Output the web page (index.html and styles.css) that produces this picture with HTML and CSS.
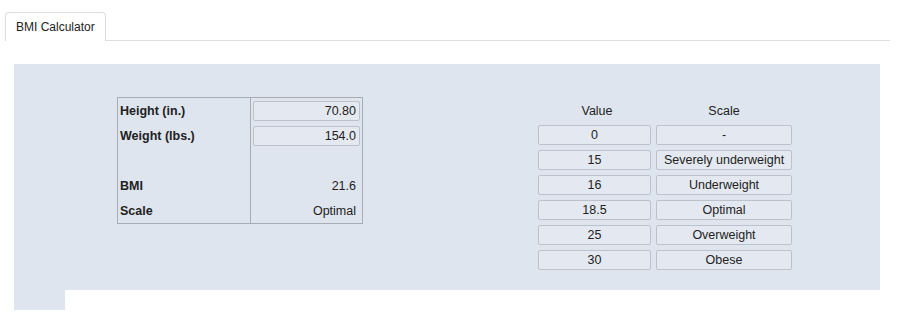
FILE: index.html
```html
<!DOCTYPE html>
<html lang="en">
<head>
    <meta charset="UTF-8">
    <title>BMI Calculator</title>
    <link rel="stylesheet" href="styles.css">
</head>
<body>
    <div class="tabbar">
        <div class="tab">BMI Calculator</div>
        <div class="tab-line"></div>
    </div>
    <div class="panel">
        <table class="calc">
            <tr>
                <td class="label">Height (in.)</td>
                <td class="value"><div class="field">70.80</div></td>
            </tr>
            <tr>
                <td class="label">Weight (lbs.)</td>
                <td class="value"><div class="field">154.0</div></td>
            </tr>
            <tr>
                <td class="label"></td>
                <td class="value"></td>
            </tr>
            <tr>
                <td class="label">BMI</td>
                <td class="value"><div class="out">21.6</div></td>
            </tr>
            <tr>
                <td class="label">Scale</td>
                <td class="value"><div class="out">Optimal</div></td>
            </tr>
        </table>
        <table class="scale">
            <tr>
                <th>Value</th>
                <th>Scale</th>
            </tr>
            <tr><td><div class="cell val">0</div></td><td><div class="cell name">-</div></td></tr>
            <tr><td><div class="cell val">15</div></td><td><div class="cell name">Severely underweight</div></td></tr>
            <tr><td><div class="cell val">16</div></td><td><div class="cell name">Underweight</div></td></tr>
            <tr><td><div class="cell val">18.5</div></td><td><div class="cell name">Optimal</div></td></tr>
            <tr><td><div class="cell val">25</div></td><td><div class="cell name">Overweight</div></td></tr>
            <tr><td><div class="cell val">30</div></td><td><div class="cell name">Obese</div></td></tr>
        </table>
    </div>
    <div class="stub"></div>
</body>
</html>
```

FILE: styles.css
```css
body {
    font-family: "Liberation Sans", Arial, sans-serif;
    font-size: 12.5px;
    color: #222;
    margin: 0;
    padding: 0;
    background-color: #fff;
}
.tabbar {
    display: flex;
    align-items: flex-end;
    padding: 12px 10px 0 5px;
}
.tab {
    height: 28px;
    line-height: 29px;
    padding: 0 10px;
    border: 1px solid #ddd;
    border-bottom: none;
    border-radius: 4px 4px 0 0;
    font-size: 12px;
    color: #222;
}
.tab-line {
    flex: 1;
    border-bottom: 1px solid #ddd;
}
.panel {
    display: flex;
    align-items: flex-start;
    margin: 23px 20px 0 14px;
    height: 226px;
    background-color: #dfe5ee;
    box-sizing: border-box;
    padding: 33px 0 0 103px;
}
.stub {
    margin-left: 14px;
    width: 51px;
    height: 20px;
    background-color: #dfe5ee;
}
.calc {
    border-collapse: collapse;
    border: 1px solid #a7adb5;
    width: 246px;
}
.calc td {
    height: 25px;
    padding: 0;
}
.calc .label {
    width: 130px;
    padding-left: 2px;
    font-weight: bold;
    border-right: 1px solid #a7adb5;
}
.calc .value {
    padding: 0 2px 0 2px;
}
.field, .cell {
    height: 18px;
    line-height: 18px;
    border: 1px solid #bcc2cb;
    border-radius: 2px;
    background-color: #e4e9f1;
}
.field {
    text-align: right;
    padding-right: 3px;
}
.out {
    text-align: right;
    padding-right: 4px;
}
.scale {
    margin-left: 175px;
    border-collapse: separate;
    border-spacing: 0;
}
.scale th {
    font-weight: normal;
    height: 28px;
    padding: 0;
    vertical-align: middle;
}
.scale td {
    padding: 0 0 5px 0;
}
.scale td:first-child {
    padding-right: 5px;
}
.cell {
    text-align: center;
}
.cell.val {
    width: 111px;
}
.cell.name {
    width: 134px;
}
```
